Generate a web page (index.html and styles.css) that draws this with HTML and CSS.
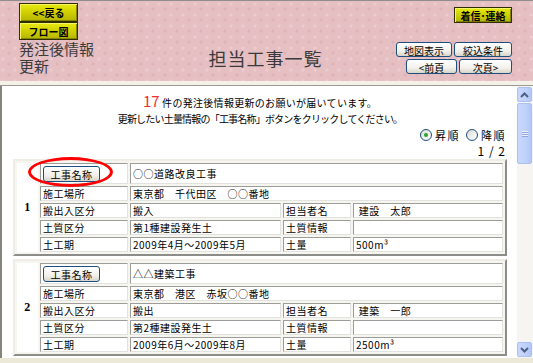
FILE: index.html
```html
<!DOCTYPE html>
<html lang="ja">

<head>
    <meta charset="UTF-8">
    <meta name="viewport" content="width=device-width, initial-scale=1.0">
    <title>担当工事一覧</title>
    <link rel="stylesheet" href="styles.css">
</head>

<body>
    <div class="window">
        <div class="header">
            <div class="head_left">
                <button class="ybtn back">&lt;&lt;戻る</button>
                <button class="ybtn flow">フロー図</button>
                <div class="sub_title">発注後情報更新</div>
            </div>
            <div class="title">担当工事一覧</div>
            <div class="head_right">
                <button class="ybtn contact">着信･連絡</button>
                <div class="btn_row">
                    <button class="xbtn map">地図表示</button>
                    <button class="xbtn filter">絞込条件</button>
                </div>
                <div class="btn_row">
                    <button class="xbtn prev">&lt;前頁</button>
                    <button class="xbtn next">次頁&gt;</button>
                </div>
            </div>
        </div>
        <div class="sep"></div>
        <div class="main">
            <div class="content">
                <p class="msg"><span class="count">17</span> 件の発注後情報更新のお願いが届いています。<br><span class="hint">更新したい土量情報の「工事名称」ボタンをクリックしてください。</span></p>
                <div class="sort">
                    <span class="radio on"></span><span class="rlabel">昇順</span>
                    <span class="radio"></span><span class="rlabel">降順</span>
                </div>
                <div class="pager">1 / 2</div>

                <div class="card">
                    <div class="mark"></div>
                    <table>
                        <colgroup>
                            <col class="c_no"><col class="c_lbl"><col class="c_val"><col class="c_lbl2"><col>
                        </colgroup>
                        <tr class="first">
                            <td class="no" rowspan="5">1</td>
                            <td><button class="xbtn name">工事名称</button></td>
                            <td colspan="3">○○道路改良工事</td>
                        </tr>
                        <tr>
                            <td>施工場所</td>
                            <td colspan="3">東京都　千代田区　○○番地</td>
                        </tr>
                        <tr>
                            <td>搬出入区分</td>
                            <td>搬入</td>
                            <td>担当者名</td>
                            <td>&nbsp;建設　太郎</td>
                        </tr>
                        <tr>
                            <td>土質区分</td>
                            <td>第1種建設発生土</td>
                            <td>土質情報</td>
                            <td></td>
                        </tr>
                        <tr>
                            <td>土工期</td>
                            <td>2009年4月～2009年5月</td>
                            <td>土量</td>
                            <td>500m³</td>
                        </tr>
                    </table>
                </div>

                <div class="card">
                    <table>
                        <colgroup>
                            <col class="c_no"><col class="c_lbl"><col class="c_val"><col class="c_lbl2"><col>
                        </colgroup>
                        <tr class="first">
                            <td class="no" rowspan="5">2</td>
                            <td><button class="xbtn name">工事名称</button></td>
                            <td colspan="3">△△建築工事</td>
                        </tr>
                        <tr>
                            <td>施工場所</td>
                            <td colspan="3">東京都　港区　赤坂○○番地</td>
                        </tr>
                        <tr>
                            <td>搬出入区分</td>
                            <td>搬出</td>
                            <td>担当者名</td>
                            <td>&nbsp;建築　一郎</td>
                        </tr>
                        <tr>
                            <td>土質区分</td>
                            <td>第2種建設発生土</td>
                            <td>土質情報</td>
                            <td></td>
                        </tr>
                        <tr>
                            <td>土工期</td>
                            <td>2009年6月～2009年8月</td>
                            <td>土量</td>
                            <td>2500m³</td>
                        </tr>
                    </table>
                </div>
            </div>
            <div class="scrollbar">
                <div class="sb_btn">
                    <svg width="9" height="6" viewBox="0 0 9 6"><path d="M1 5 L4.5 1.5 L8 5" fill="none" stroke="#4d6185" stroke-width="2"/></svg>
                </div>
                <div class="sb_thumb">
                    <span></span><span></span><span></span>
                </div>
                <div class="sb_track"></div>
                <div class="sb_btn">
                    <svg width="9" height="6" viewBox="0 0 9 6"><path d="M1 1 L4.5 4.5 L8 1" fill="none" stroke="#4d6185" stroke-width="2"/></svg>
                </div>
            </div>
        </div>
        <div class="foot"></div>
    </div>
</body>

</html>
```

FILE: styles.css
```css
* {
    margin: 0;
    padding: 0;
    box-sizing: border-box;
}

body {
    font-family: "Noto Sans CJK JP", "Noto Sans", sans-serif;
    color: #000;
    background: #ece9d8;
}

.window {
    width: 533px;
    height: 363px;
    overflow: hidden;
    display: flex;
    flex-direction: column;
}

/* header */
.header {
    height: 81px;
    flex: none;
    display: grid;
    grid-template-columns: 1fr auto 1fr;
    padding: 2px 21px 0 19px;
    border-top: 1px solid #8e8e8e;
    background-color: #e5bfc2;
    background-image:
        radial-gradient(circle at 3px 3px, rgba(255, 255, 255, 0.22) 1px, transparent 2px),
        radial-gradient(circle at 9px 8px, rgba(170, 110, 115, 0.14) 1px, transparent 2px);
    background-size: 12px 11px;
}

.head_left {
    display: flex;
    flex-direction: column;
    align-items: flex-start;
}

.ybtn {
    width: 59px;
    height: 19px;
    font-family: "Noto Sans CJK JP", sans-serif;
    font-size: 10px;
    font-weight: bold;
    color: #000;
    background: linear-gradient(#eaea10, #cfcf00 50%, #b4b400);
    border: 1px solid #2e2e00;
    box-shadow: inset 1px 1px 0 #f6f66a, inset -1px -1px 0 #848400;
}

.flow {
    height: 18px;
}

.sub_title {
    width: 80px;
    font-size: 15px;
    line-height: 17px;
    color: #3c3c3c;
}

.title {
    margin-top: 45px;
    font-size: 18px;
    line-height: 20px;
    letter-spacing: 1px;
    color: #3a3a3a;
}

.head_right {
    display: flex;
    flex-direction: column;
    align-items: flex-end;
}

.contact {
    width: 58px;
    height: 16px;
    margin-top: 4px;
}

.btn_row {
    display: flex;
    gap: 2px;
}

.btn_row:nth-child(2) {
    margin-top: 19px;
}

.btn_row:nth-child(3) {
    margin-top: 2px;
}

.xbtn {
    height: 15px;
    font-family: "Noto Sans CJK JP", sans-serif;
    font-size: 10px;
    color: #000;
    background: linear-gradient(#ffffff, #f2f1ec 60%, #d8d4c8);
    border: 1px solid #1d4f80;
    border-radius: 3px;
}

.map { width: 56px; }
.filter { width: 58px; }
.prev { width: 51px; }
.next { width: 53px; }

.sep {
    height: 5px;
    flex: none;
    background: #f3f1e8;
    border-bottom: 1px solid #9d9b8f;
}

/* main area */
.main {
    flex: 1;
    display: flex;
    min-height: 0;
}

.content {
    flex: 1;
    background: #fff;
    border-left: 2px solid #85857b;
    padding: 7px 10px 0 11px;
    overflow: hidden;
}

.msg {
    text-align: center;
    font-size: 10px;
    line-height: 16px;
    letter-spacing: 0.3px;
}

.hint {
    letter-spacing: -0.8px;
}

.count {
    color: #f03030;
    font-size: 15px;
    letter-spacing: 0;
}

.sort {
    display: flex;
    justify-content: flex-end;
    align-items: center;
    height: 16px;
    padding-right: 1px;
}

.radio {
    position: relative;
    width: 12px;
    height: 12px;
    border: 1px solid #1c5180;
    border-radius: 50%;
    background: linear-gradient(135deg, #dcdcd4, #ffffff);
    margin-left: 6px;
}

.radio.on::after {
    content: "";
    position: absolute;
    left: 3px;
    top: 3px;
    width: 4px;
    height: 4px;
    border-radius: 50%;
    background: #29a329;
}

.rlabel {
    font-size: 11px;
    letter-spacing: 1.5px;
    margin-left: 3px;
}

.pager {
    text-align: right;
    font-size: 12px;
    line-height: 16px;
    letter-spacing: 1px;
    padding-right: 1px;
}

/* cards */
.card {
    position: relative;
    margin-bottom: 3px;
}

.card table {
    width: 100%;
    table-layout: fixed;
    border-collapse: separate;
    border-spacing: 2px;
    border: 2px solid;
    border-color: #efede5 #8c8c88 #8c8c88 #efede5;
    background: #f6f5f0;
}

.c_no { width: 21px; }
.c_lbl { width: 88px; }
.c_val { width: 151px; }
.c_lbl2 { width: 68px; }

td {
    height: 15px;
    padding: 0 2px;
    font-size: 10px;
    line-height: 13px;
    letter-spacing: 0.5px;
    white-space: nowrap;
    overflow: hidden;
    background: #fff;
    border: 1px solid;
    border-color: #9c9c98 #e2e2de #e2e2de #9c9c98;
}

.first td {
    height: 21px;
}

td.no {
    border-color: #fff;
    text-align: center;
    font-family: "Liberation Serif", serif;
    font-weight: bold;
    font-size: 12px;
}

.name {
    display: block;
    width: 57px;
    height: 16px;
    letter-spacing: 0.5px;
}

.mark {
    position: absolute;
    left: 15px;
    top: -2px;
    width: 85px;
    height: 30px;
    border: 3px solid #f00;
    border-radius: 50%;
    z-index: 2;
}

/* scrollbar */
.scrollbar {
    width: 16px;
    flex: none;
    display: flex;
    flex-direction: column;
    padding: 1px 1px 1px 0;
    background: #f6f5f1;
}

.sb_btn,
.sb_thumb {
    height: 15px;
    background: linear-gradient(90deg, #c9d8fc, #bfd1fb 60%, #b2c6f6);
    border: 1px solid #adc1ef;
    border-radius: 2px;
    display: flex;
    align-items: center;
    justify-content: center;
}

.sb_thumb {
    height: 61px;
    margin-top: 1px;
    flex-direction: column;
    gap: 1px;
}

.sb_thumb span {
    width: 6px;
    height: 1px;
    background: #eef2fd;
    box-shadow: 0 1px 0 #8ea6db;
}

.sb_track {
    flex: 1;
}

.foot {
    height: 5px;
    flex: none;
    background: #ece9d8;
}
```
